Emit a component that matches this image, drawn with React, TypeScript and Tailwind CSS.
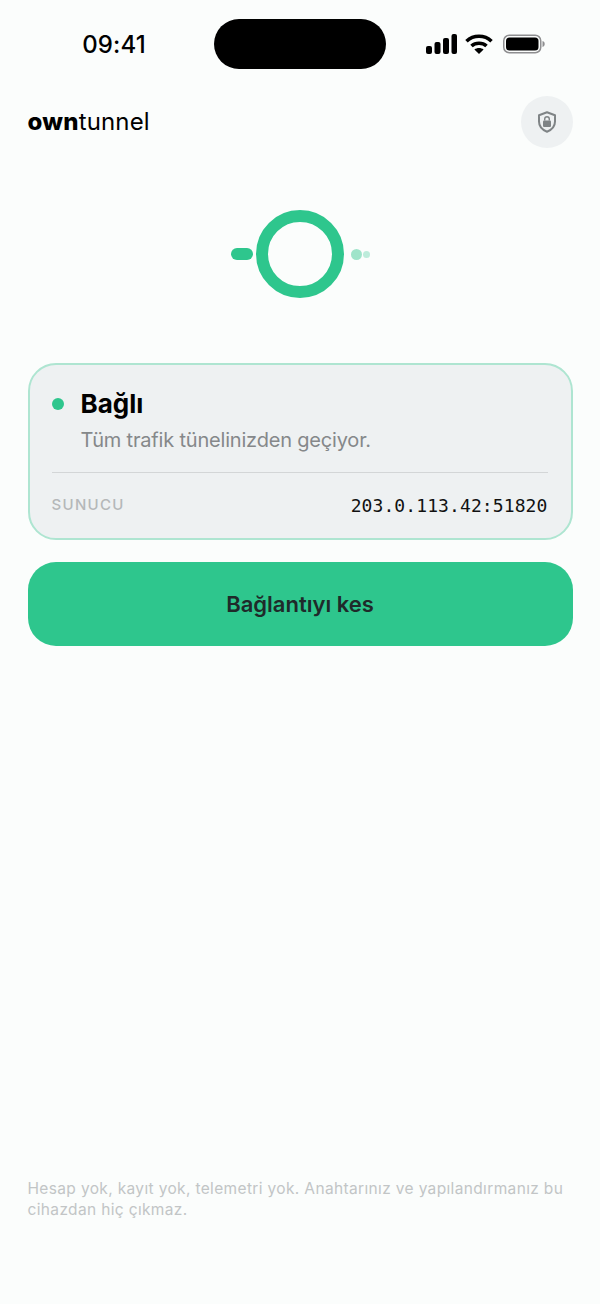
export default function App() {
  return (
    <div className="w-[600px] h-[1304px] bg-[#fbfdfc] flex flex-col overflow-hidden font-['Inter',sans-serif]">
      {/* status bar */}
      <div className="h-[96px] pt-[19px] flex items-start justify-between shrink-0">
        <div className="w-[214px] h-[50px] flex items-center justify-center pl-[14px] pt-[2px] text-[24px] font-medium text-black tracking-[0.15px]">09:41</div>
        <div className="w-[172px] h-[50px] rounded-[25px] bg-black" />
        <div className="w-[214px] h-[50px] flex items-center pl-[40px]">
          <svg width="31" height="20" viewBox="0 0 31 20" fill="black">
            <rect x="0" y="12" width="6" height="8" rx="2" />
            <rect x="8.5" y="8" width="6" height="12" rx="2" />
            <rect x="17" y="4" width="6" height="16" rx="2" />
            <rect x="25.5" y="0" width="5.5" height="20" rx="2" />
          </svg>
          <svg width="28" height="20" viewBox="0 0 28 20" fill="none" stroke="black" strokeWidth="3.6" className="ml-[8px]">
            <path d="M1.5 7.2C8.5 0.6 19.5 0.6 26.5 7.2" />
            <path d="M6.5 12C10.5 8.3 17.500 8.3 21.5 12" />
            <path d="M14 20l-4.6-4.6c2.6-2 6.6-2 9.2 0z" fill="black" stroke="none" />
          </svg>
          <svg width="42" height="20" viewBox="0 0 42 20" className="ml-[10px]">
            <rect x="0.75" y="1.25" width="37" height="17.5" rx="5.5" fill="none" stroke="#8e8e90" strokeWidth="1.5" />
            <rect x="3" y="3.5" width="32.5" height="13" rx="3.5" fill="black" />
            <path d="M39.5 7v6c1.5-.4 2.2-1.6 2.2-3s-.7-2.600-2.200-3z" fill="#8e8e90" />
          </svg>
        </div>
      </div>

      {/* header */}
      <div className="h-[52px] pl-[27.5px] pr-[27px] flex items-center justify-between shrink-0">
        <div className="text-[24px] text-black leading-none">
          <span className="font-extrabold tracking-[0.2px]">own</span>
          <span className="font-normal tracking-[0.15px]">tunnel</span>
        </div>
        <div className="w-[52px] h-[52px] rounded-full bg-[#eef1f2] flex items-center justify-center">
          <svg width="20" height="22" viewBox="0 0 20 22">
            <path d="M10 1.300 18 4.200V10.500C18 15.300 14.800 18.800 10 20.700 5.200 18.800 2 15.300 2 10.500V4.200Z" fill="none" stroke="#7f8486" strokeWidth="2" strokeLinejoin="round" />
            <rect x="6" y="9.500" width="8" height="6.500" rx="1" fill="#7f8486" />
            <path d="M7.700 9.500V8a2.300 2.300 0 0 1 4.600 0v1.500" fill="none" stroke="#7f8486" strokeWidth="1.400" />
          </svg>
        </div>
      </div>

      {/* tunnel indicator */}
      <div className="mt-[62px] h-[88px] flex items-center justify-center shrink-0">
        <div className="relative w-[88px] h-[88px] rounded-full border-[12px] border-[#2ec68d]">
          <div className="absolute left-[-37px] top-[26px] w-[22px] h-[12px] rounded-[6px] bg-[#2ec68d]" />
          <div className="absolute left-[83px] top-[26.5px] w-[11px] h-[11px] rounded-full bg-[#2ec68d] opacity-45" />
          <div className="absolute left-[95px] top-[28.5px] w-[7px] h-[7px] rounded-full bg-[#2ec68d] opacity-30" />
        </div>
      </div>

      {/* card */}
      <div className="mt-[65px] mx-[27.5px] h-[177px] rounded-[28px] border-[2px] border-[#aee5d1] bg-[#eef1f2] pl-[22px] pr-[23px] pt-[21px] shrink-0">
        <div className="flex items-center h-[36px]">
          <div className="w-[12px] h-[12px] rounded-full bg-[#2ec68d]" />
          <div className="ml-[17px] text-[26px] font-bold text-black leading-none">Bağlı</div>
        </div>
        <div className="ml-[29px] mt-[5px] text-[20px] leading-[26px] tracking-[-0.19px] text-[#85888a]">Tüm trafik tünelinizden geçiyor.</div>
        <div className="mt-[19px] h-px bg-[#d3d6d7]" />
        <div className="h-[64px] flex items-center justify-between">
          <div className="text-[15px] font-medium tracking-[1.3px] text-[#b5b8b9]">SUNUCU</div>
          <div className="text-[18px] font-['DejaVu_Sans_Mono',monospace] text-[#111] tracking-[0.1px]">203.0.113.42:51820</div>
        </div>
      </div>

      {/* button */}
      <div className="mt-[22px] mx-[27.5px] h-[84px] rounded-[28px] bg-[#2ec68d] flex items-center justify-center text-[22px] font-semibold text-[#1f2a2a] shrink-0">
        Bağlantıyı kes
      </div>

      {/* footer */}
      <div className="mt-auto mx-[27.5px] mb-[84px] text-[15.5px] leading-[21px] tracking-[0.35px] text-[#c2c5c6]">
        Hesap yok, kayıt yok, telemetri yok. Anahtarınız ve yapılandırmanız bu cihazdan hiç çıkmaz.
      </div>
    </div>
  );
}
